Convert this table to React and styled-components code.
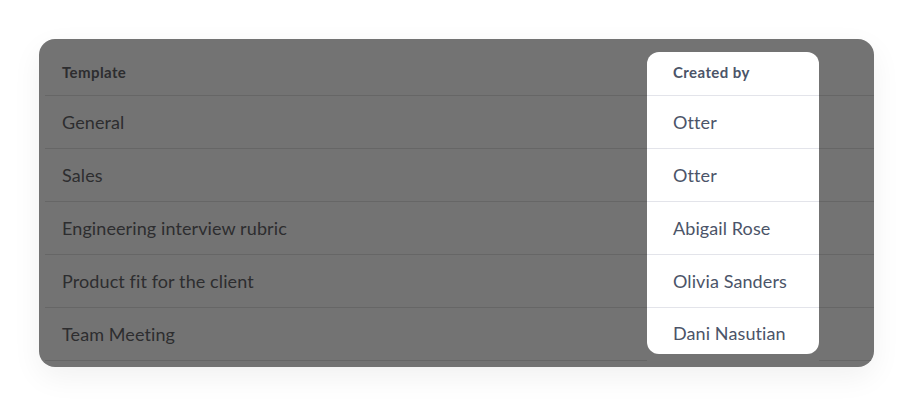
import styled, { createGlobalStyle } from 'styled-components';

const rows = [
  { template: 'General', author: 'Otter' },
  { template: 'Sales', author: 'Otter' },
  { template: 'Engineering interview rubric', author: 'Abigail Rose' },
  { template: 'Product fit for the client', author: 'Olivia Sanders' },
  { template: 'Team Meeting', author: 'Dani Nasutian' },
];

const GlobalStyle = createGlobalStyle`
  body {
    margin: 0;
    background: #ffffff;
    font-family: "Lato", "Noto Sans", sans-serif;
  }
`;

const Page = styled.div`
  width: 913px;
  height: 407px;
  padding: 39px;
  box-sizing: border-box;
`;

const Card = styled.div`
  width: 835px;
  height: 328px;
  box-sizing: border-box;
  background: #737373;
  border-radius: 16px;
  overflow: hidden;
  padding: 13px 0 7px 6px;
  box-shadow: 0 10px 30px rgba(0, 0, 0, 0.06);
`;

const Table = styled.div`
  display: grid;
  grid-template-columns: 602px 172px 1fr;
  grid-template-rows: 44px repeat(5, 53px);
`;

const Cell = styled.div`
  display: flex;
  align-items: center;
  padding-left: 17px;
  border-bottom: 1px solid #666666;
  color: #2d2d2f;
  font-size: ${p => (p.$head ? '15px' : '18px')};
  font-weight: ${p => (p.$head ? 700 : 400)};
  letter-spacing: ${p => (p.$head ? '0.4px' : '0.1px')};
  padding-bottom: ${p => (p.$head ? '3px' : '0')};
  box-sizing: border-box;
`;

const Spot = styled(Cell)`
  background: #ffffff;
  color: #4b5468;
  padding-left: 26px;
  border-bottom: ${p => (p.$last ? 'none' : '1px solid #e3e4ea')};
  border-radius: ${p => (p.$head ? '12px 12px 0 0' : p.$last ? '0 0 12px 12px' : '0')};
  margin-bottom: ${p => (p.$last ? '7px' : '0')};
  padding-top: ${p => (p.$last ? '3px' : '0')};
`;

const Filler = styled.div`
  border-bottom: 1px solid #666666;
`;

export default function App() {
  return (
    <>
      <GlobalStyle />
      <Page>
        <Card>
          <Table>
            <Cell $head>Template</Cell>
            <Spot $head>Created by</Spot>
            <Filler />
            {rows.map((r, i) => (
              <>
                <Cell key={'t' + i}>{r.template}</Cell>
                <Spot key={'a' + i} $last={i === rows.length - 1}>{r.author}</Spot>
                <Filler key={'f' + i} />
              </>
            ))}
          </Table>
        </Card>
      </Page>
    </>
  );
}
